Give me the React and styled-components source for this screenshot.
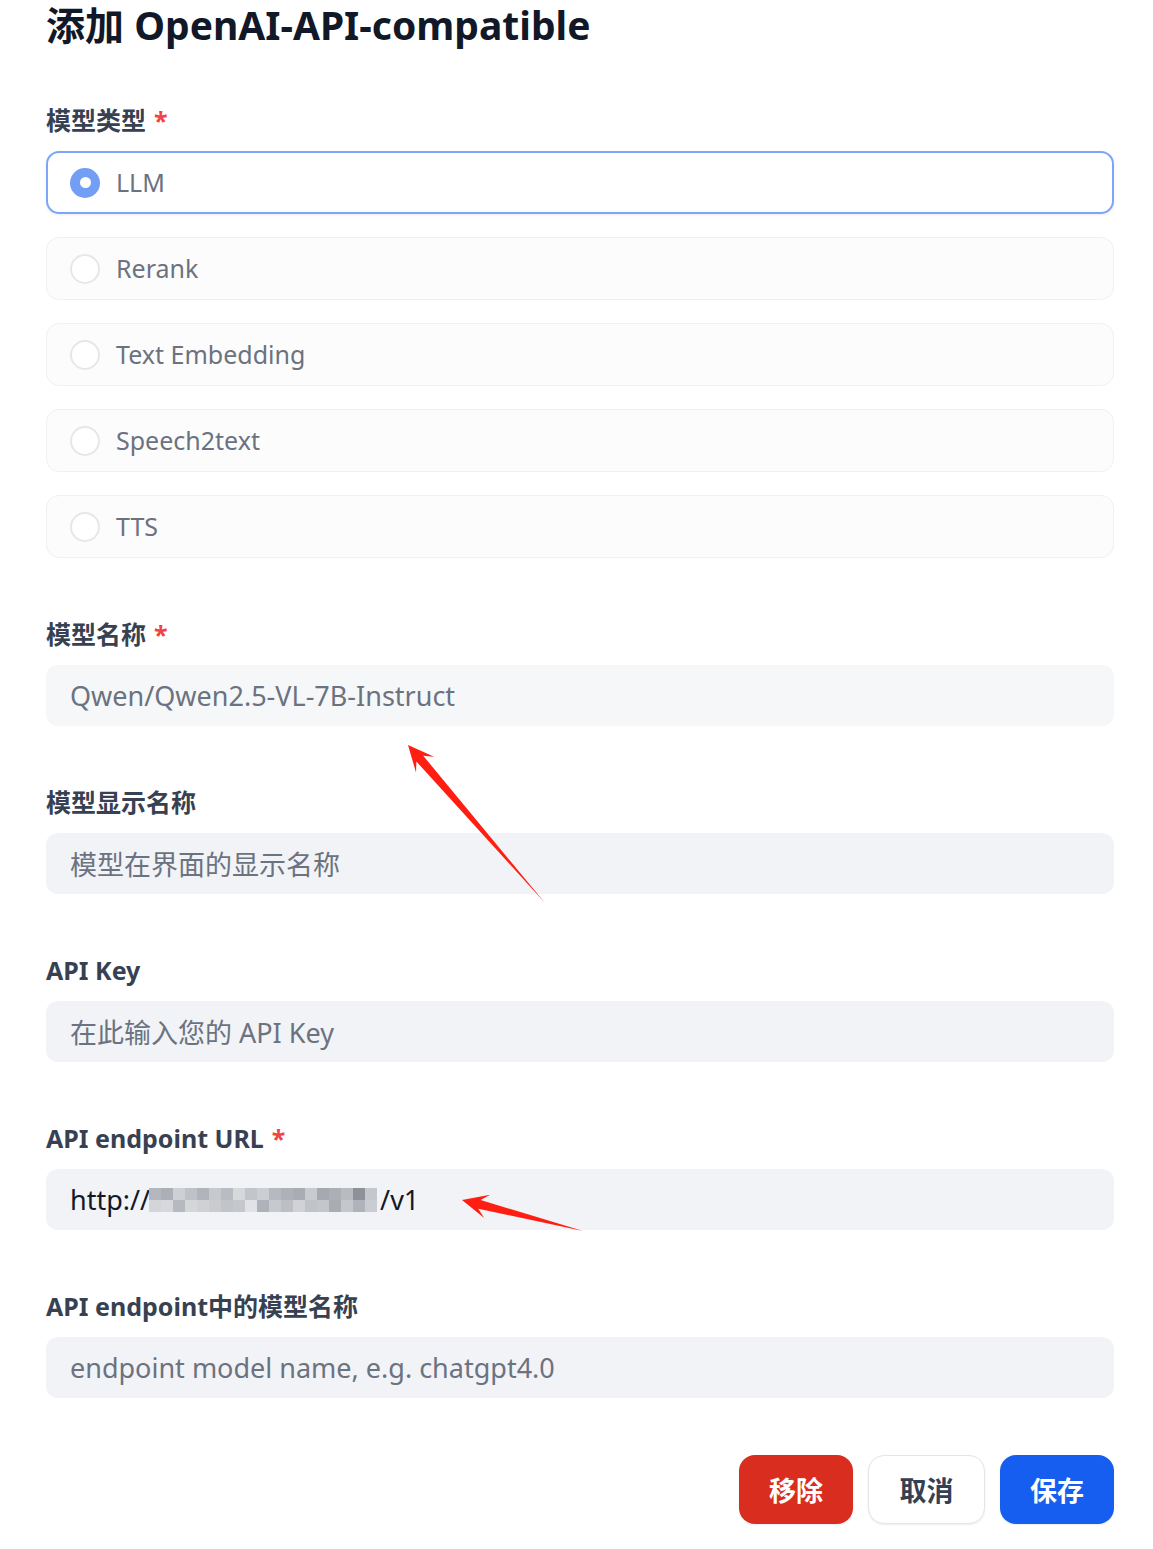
import React from "react";
import styled, { createGlobalStyle } from "styled-components";

const Global = createGlobalStyle`
  html, body { margin: 0; padding: 0; background: #fff; }
  body { font-family: "Noto Sans", "Noto Sans CJK SC", sans-serif; }
  * { box-sizing: border-box; }
`;

const Page = styled.div`
  position: relative;
  width: 1153px;
  min-height: 1549px;
  padding: 0 39px 0 46px;
`;

const Title = styled.h1`
  margin: 0;
  font-size: 39px;
  line-height: 50px;
  font-weight: 700;
  color: #111827;
  font-family: "Noto Sans", "Noto Sans CJK SC", sans-serif;
`;

const Form = styled.div`
  margin-top: 55px;
  display: flex;
  flex-direction: column;
  gap: 61px;
`;

const Field = styled.div`
  display: flex;
  flex-direction: column;
`;

const Label = styled.div`
  font-size: 25px;
  line-height: 30px;
  font-weight: 700;
  color: #374151;
  margin-bottom: 16px;
`;

const Star = styled.span`
  color: #ef4444;
  margin-left: 8px;
`;

const RadioList = styled.div`
  display: flex;
  flex-direction: column;
  gap: 23px;
`;

const RadioRow = styled.div`
  height: 63px;
  display: flex;
  align-items: center;
  gap: 16px;
  border-radius: 13px;
  padding-left: ${(p) => (p.$active ? "22px" : "23px")};
  border: ${(p) => (p.$active ? "2px solid #7ea6f8" : "1px solid #eff0f3")};
  background: ${(p) => (p.$active ? "#ffffff" : "#fcfcfd")};
  box-shadow: ${(p) => (p.$active ? "0 1px 3px rgba(16,24,40,0.08)" : "none")};
`;

const RadioDot = styled.span`
  width: 30px;
  height: 30px;
  border-radius: 50%;
  flex: none;
  display: flex;
  align-items: center;
  justify-content: center;
  background: ${(p) => (p.$active ? "#729ef6" : "#fff")};
  border: ${(p) => (p.$active ? "none" : "2px solid #e5e7eb")};
  &::after {
    content: "";
    display: ${(p) => (p.$active ? "block" : "none")};
    width: 11px;
    height: 11px;
    border-radius: 50%;
    background: #fff;
  }
`;

const RadioText = styled.span`
  font-size: 25px;
  color: #6b7280;
  line-height: 1;
`;

const Input = styled.div`
  height: 61px;
  border-radius: 12px;
  background: ${(p) => (p.$light ? "#f6f7f9" : "#f2f3f6")};
  padding-left: 24px;
  display: flex;
  align-items: center;
  font-size: 27px;
  color: ${(p) => (p.$filled ? "#111827" : "#6b7280")};
`;

const Footer = styled.div`
  margin-top: 57px;
  display: flex;
  justify-content: flex-end;
  gap: 15px;
`;

const Button = styled.button`
  height: 69px;
  min-width: ${(p) => (p.$wide ? "117px" : "114px")};
  border-radius: 16px;
  font-family: "Noto Sans", "Noto Sans CJK SC", sans-serif;
  font-size: 27px;
  font-weight: 700;
  cursor: pointer;
  border: ${(p) => (p.$variant === "ghost" ? "1px solid #e3e5e8" : "none")};
  background: ${(p) =>
    p.$variant === "danger" ? "#d92d20" : p.$variant === "primary" ? "#155eef" : "#ffffff"};
  color: ${(p) => (p.$variant === "ghost" ? "#344054" : "#ffffff")};
  box-shadow: 0 1px 2px rgba(16, 24, 40, 0.08);
`;

const Overlay = styled.svg`
  position: absolute;
  left: 0;
  top: 0;
  width: 1153px;
  height: 1549px;
  pointer-events: none;
`;

const Mosaic = styled.svg`
  display: block;
  margin: 0 3px 0 -1px;
`;

function arrowPoints(tx, ty, hx, hy) {
  const dx = hx - tx;
  const dy = hy - ty;
  const L = Math.hypot(dx, dy);
  const ux = dx / L;
  const uy = dy / L;
  const nx = -uy;
  const ny = ux;
  const headLen = 26;
  const barb = 12;
  const neck = 4.5;
  const bx = hx - ux * headLen;
  const by = hy - uy * headLen;
  const nkx = hx - ux * (headLen - 8);
  const nky = hy - uy * (headLen - 8);
  const pts = [
    [tx, ty],
    [nkx + nx * neck, nky + ny * neck],
    [bx + nx * barb, by + ny * barb],
    [hx, hy],
    [bx - nx * barb, by - ny * barb],
    [nkx - nx * neck, nky - ny * neck],
  ];
  return pts.map((p) => p.map((v) => v.toFixed(1)).join(",")).join(" ");
}

const mosaicCols = [
  ["#b4b7bd", "#d3d5d9"],
  ["#acb0b6", "#d6d8db"],
  ["#cdd0d4", "#b6b9bf"],
  ["#bfc2c7", "#d4d6da"],
  ["#b1b4ba", "#cfd1d5"],
  ["#c6c9cd", "#c9cbcf"],
  ["#b9bcc2", "#c1c4c9"],
  ["#d6d8dc", "#c4c7cc"],
  ["#c2c5ca", "#e0e2e5"],
  ["#cbced2", "#afb3b9"],
  ["#b6b9bf", "#c6c9ce"],
  ["#aeb1b7", "#bcbfc4"],
  ["#a9adb3", "#d0d2d6"],
  ["#c8cbcf", "#c0c3c8"],
  ["#a6aab0", "#c3c6cb"],
  ["#acafb5", "#a9acb2"],
  ["#b8bbc0", "#c4c7cc"],
  ["#8e9298", "#b0b3b9"],
  ["#c4c7cc", "#c9ccd0"],
];

function BlurBlock() {
  const cw = 12;
  const ch = 12;
  return (
    <Mosaic width={mosaicCols.length * cw} height={ch * 2} viewBox={`0 0 ${mosaicCols.length * cw} ${ch * 2}`}>
      {mosaicCols.map((c, i) => (
        <g key={i}>
          <rect x={i * cw} y={0} width={cw} height={ch} fill={c[0]} />
          <rect x={i * cw} y={ch} width={cw} height={ch} fill={c[1]} />
        </g>
      ))}
    </Mosaic>
  );
}

const types = ["LLM", "Rerank", "Text Embedding", "Speech2text", "TTS"];

export default function App() {
  return (
    <Page>
      <Global />
      <Title>添加 OpenAI-API-compatible</Title>
      <Form>
        <Field>
          <Label>
            模型类型<Star>*</Star>
          </Label>
          <RadioList>
            {types.map((t, i) => (
              <RadioRow key={t} $active={i === 0}>
                <RadioDot $active={i === 0} />
                <RadioText>{t}</RadioText>
              </RadioRow>
            ))}
          </RadioList>
        </Field>
        <Field>
          <Label>
            模型名称<Star>*</Star>
          </Label>
          <Input $light>Qwen/Qwen2.5-VL-7B-Instruct</Input>
        </Field>
        <Field>
          <Label>模型显示名称</Label>
          <Input>模型在界面的显示名称</Input>
        </Field>
        <Field>
          <Label>API Key</Label>
          <Input>在此输入您的 API Key</Input>
        </Field>
        <Field>
          <Label>
            API endpoint URL<Star>*</Star>
          </Label>
          <Input $filled>
            http://
            <BlurBlock />
            /v1
          </Input>
        </Field>
        <Field>
          <Label>API endpoint中的模型名称</Label>
          <Input>endpoint model name, e.g. chatgpt4.0</Input>
        </Field>
      </Form>
      <Footer>
        <Button $variant="danger">移除</Button>
        <Button $variant="ghost" $wide>
          取消
        </Button>
        <Button $variant="primary">保存</Button>
      </Footer>
      <Overlay viewBox="0 0 1153 1549">
        <polygon points={arrowPoints(545, 903, 408, 745)} fill="#ff1f12" />
        <polygon points={arrowPoints(583, 1231, 462, 1200)} fill="#ff1f12" />
      </Overlay>
    </Page>
  );
}
